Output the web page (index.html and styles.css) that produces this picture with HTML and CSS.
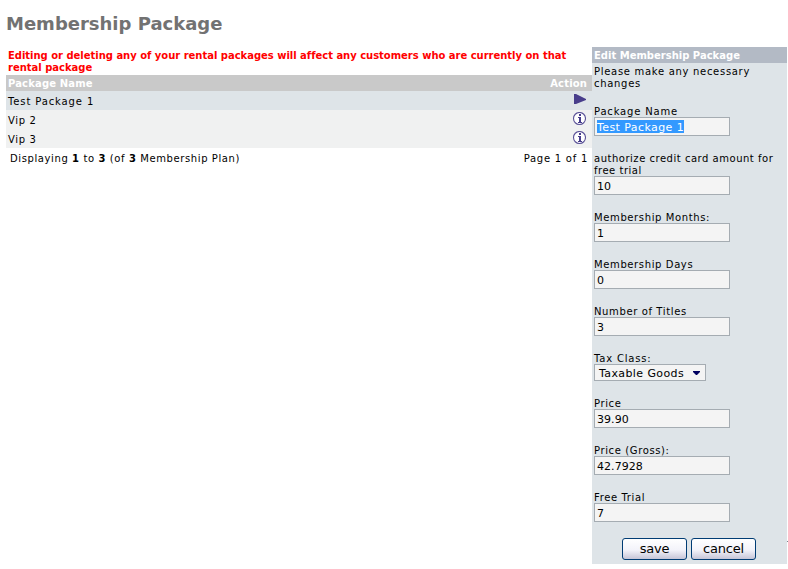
FILE: index.html
```
<!DOCTYPE html>
<html lang="en">
<head>
<meta charset="utf-8">
<title>Membership Package</title>
<link rel="stylesheet" href="styles.css">
</head>
<body>
<h1><span>Membership Package</span></h1>
<div class="layout">
  <main class="list">
    <p class="warning">Editing or deleting any of your rental packages will affect any customers who are currently on that<br>rental package</p>
    <div class="row head"><span>Package Name</span><span>Action</span></div>
    <div class="row selected"><span class="pkg">Test Package 1</span>
      <svg class="icon" width="14" height="14" viewBox="0 0 14 14"><path d="M2 1h2l10 5v1L4 11H2z" fill="#483d8b"/></svg></div>
    <div class="row"><span>Vip 2</span>
      <svg class="icon" width="14" height="14" viewBox="0 0 14 14"><circle cx="7.5" cy="6.5" r="6" fill="#fff" stroke="#5a5197" stroke-width="1.1"/><path d="M7 2h2v2H7zM6 5h3v5h1v1H6v-1h1V6H6z" fill="#483d8b"/></svg></div>
    <div class="row"><span>Vip 3</span>
      <svg class="icon" width="14" height="14" viewBox="0 0 14 14"><circle cx="7.5" cy="6.5" r="6" fill="#fff" stroke="#5a5197" stroke-width="1.1"/><path d="M7 2h2v2H7zM6 5h3v5h1v1H6v-1h1V6H6z" fill="#483d8b"/></svg></div>
    <div class="paging"><span class="count">Displaying <b>1</b> to <b>3</b> (of <b>3</b> Membership Plan)</span><span class="page">Page 1 of 1</span></div>
  </main>
  <aside class="panel">
    <h2>Edit Membership Package</h2>
    <form class="form">
      <p class="intro">Please make any necessary<br>changes</p>
      <div class="field"><label class="wide">Package Name</label><div class="input"><mark>Test Package 1</mark></div></div>
      <div class="field"><label class="tight">authorize credit card amount for<br>free trial</label><div class="input">10</div></div>
      <div class="field"><label>Membership Months:</label><div class="input">1</div></div>
      <div class="field"><label>Membership Days</label><div class="input">0</div></div>
      <div class="field"><label>Number of Titles</label><div class="input">3</div></div>
      <div class="field"><label class="wide">Tax Class:</label><div class="select"><span>Taxable Goods</span><svg width="7" height="4" viewBox="0 0 7 4"><path d="M0 0h7v1L4 4H3L0 1z" fill="#000060"/></svg></div></div>
      <div class="field"><label>Price</label><div class="input">39.90</div></div>
      <div class="field"><label>Price (Gross):</label><div class="input">42.7928</div></div>
      <div class="field"><label>Free Trial</label><div class="input">7</div></div>
      <div class="actions"><button type="button">save</button><button type="button">cancel</button></div>
    </form>
  </aside>
  <span class="tick"></span>
</div>
</body>
</html>
```
FILE: styles.css
```
* { box-sizing: border-box; }
body {
  margin: 0;
  background: #fff;
  color: #000;
  font: 10px/12px Verdana, "DejaVu Sans", sans-serif;
  letter-spacing: 0.62px;
  white-space: nowrap;
  overflow: hidden;
}
p { margin: 0; }
h1 {
  margin: 0;
  height: 47px;
  padding: 12px 0 0 6px;
  font-size: 18px;
  line-height: 24px;
  letter-spacing: 0;
  color: #727272;
}
.layout { display: flex; padding-left: 6px; }
.list { width: 586px; }
.warning {
  height: 28px;
  padding: 3px 2px 0;
  color: #f00;
  font-weight: bold;
  letter-spacing: -0.02px;
}
.row {
  display: flex;
  justify-content: space-between;
  align-items: center;
  height: 19px;
  padding: 2px 5px 0 2px;
  background: #f0f1f1;
}
.row.head {
  height: 16px;
  padding-top: 1px;
  background: #c9c9c9;
  color: #fff;
  font-weight: bold;
  letter-spacing: 0.15px;
}
.row.selected { background: #dee4e8; }
.pkg { letter-spacing: 0.88px; }
.icon { margin: -3px 1px 0 0; }
.paging {
  display: flex;
  justify-content: space-between;
  padding: 5px 4px 0 4px;
}
.count { letter-spacing: 0.6px; }
.page { letter-spacing: 0.75px; }
.panel {
  width: 195px;
  height: 517px;
  background: #dee4e8;
}
h2 {
  margin: 0;
  height: 16px;
  padding: 2px 2px 0;
  background: #b3bac5;
  color: #fff;
  font-size: 10px;
  line-height: 13px;
  letter-spacing: 0;
}
.form { padding: 2px 2px 0; }
.intro, .field { margin-bottom: 16px; }
.intro { padding-top: 1px; margin-bottom: 15px; letter-spacing: 0.7px; }
.field label { display: block; position: relative; top: 1px; }
.field .wide { letter-spacing: 0.82px; }
.field .tight { letter-spacing: 0.52px; }
.input, .select {
  border: 1px solid #a5acb2;
  background: #f4f4f4;
  font-size: 11px;
  letter-spacing: 0.05px;
}
.input {
  width: 136px;
  height: 19px;
  padding: 2px;
  line-height: 15px;
}
.input mark { display: inline-block; height: 13px; line-height: 15px; background: #3399ff; color: #fff; letter-spacing: 0.42px; }
.select {
  display: flex;
  align-items: center;
  justify-content: space-between;
  width: 112px;
  height: 17px;
  padding: 0 5px 0 4px;
  line-height: 15px;
  letter-spacing: 0.4px;
}
.select span { padding-top: 1px; }
.actions { display: flex; justify-content: center; gap: 4px; margin-left: -1px; }
button {
  width: 65px;
  height: 22px;
  padding: 0 0 1px;
  border: 1px solid #003c74;
  border-radius: 3px;
  background: linear-gradient(#fff, #f3f3fa 55%, #c6c5d7);
  color: #000;
  font: 13px/19px "DejaVu Sans", sans-serif;
  letter-spacing: -0.2px;
}
.tick { width: 1px; height: 1px; margin-top: 494px; background: #7c8790; }
```
